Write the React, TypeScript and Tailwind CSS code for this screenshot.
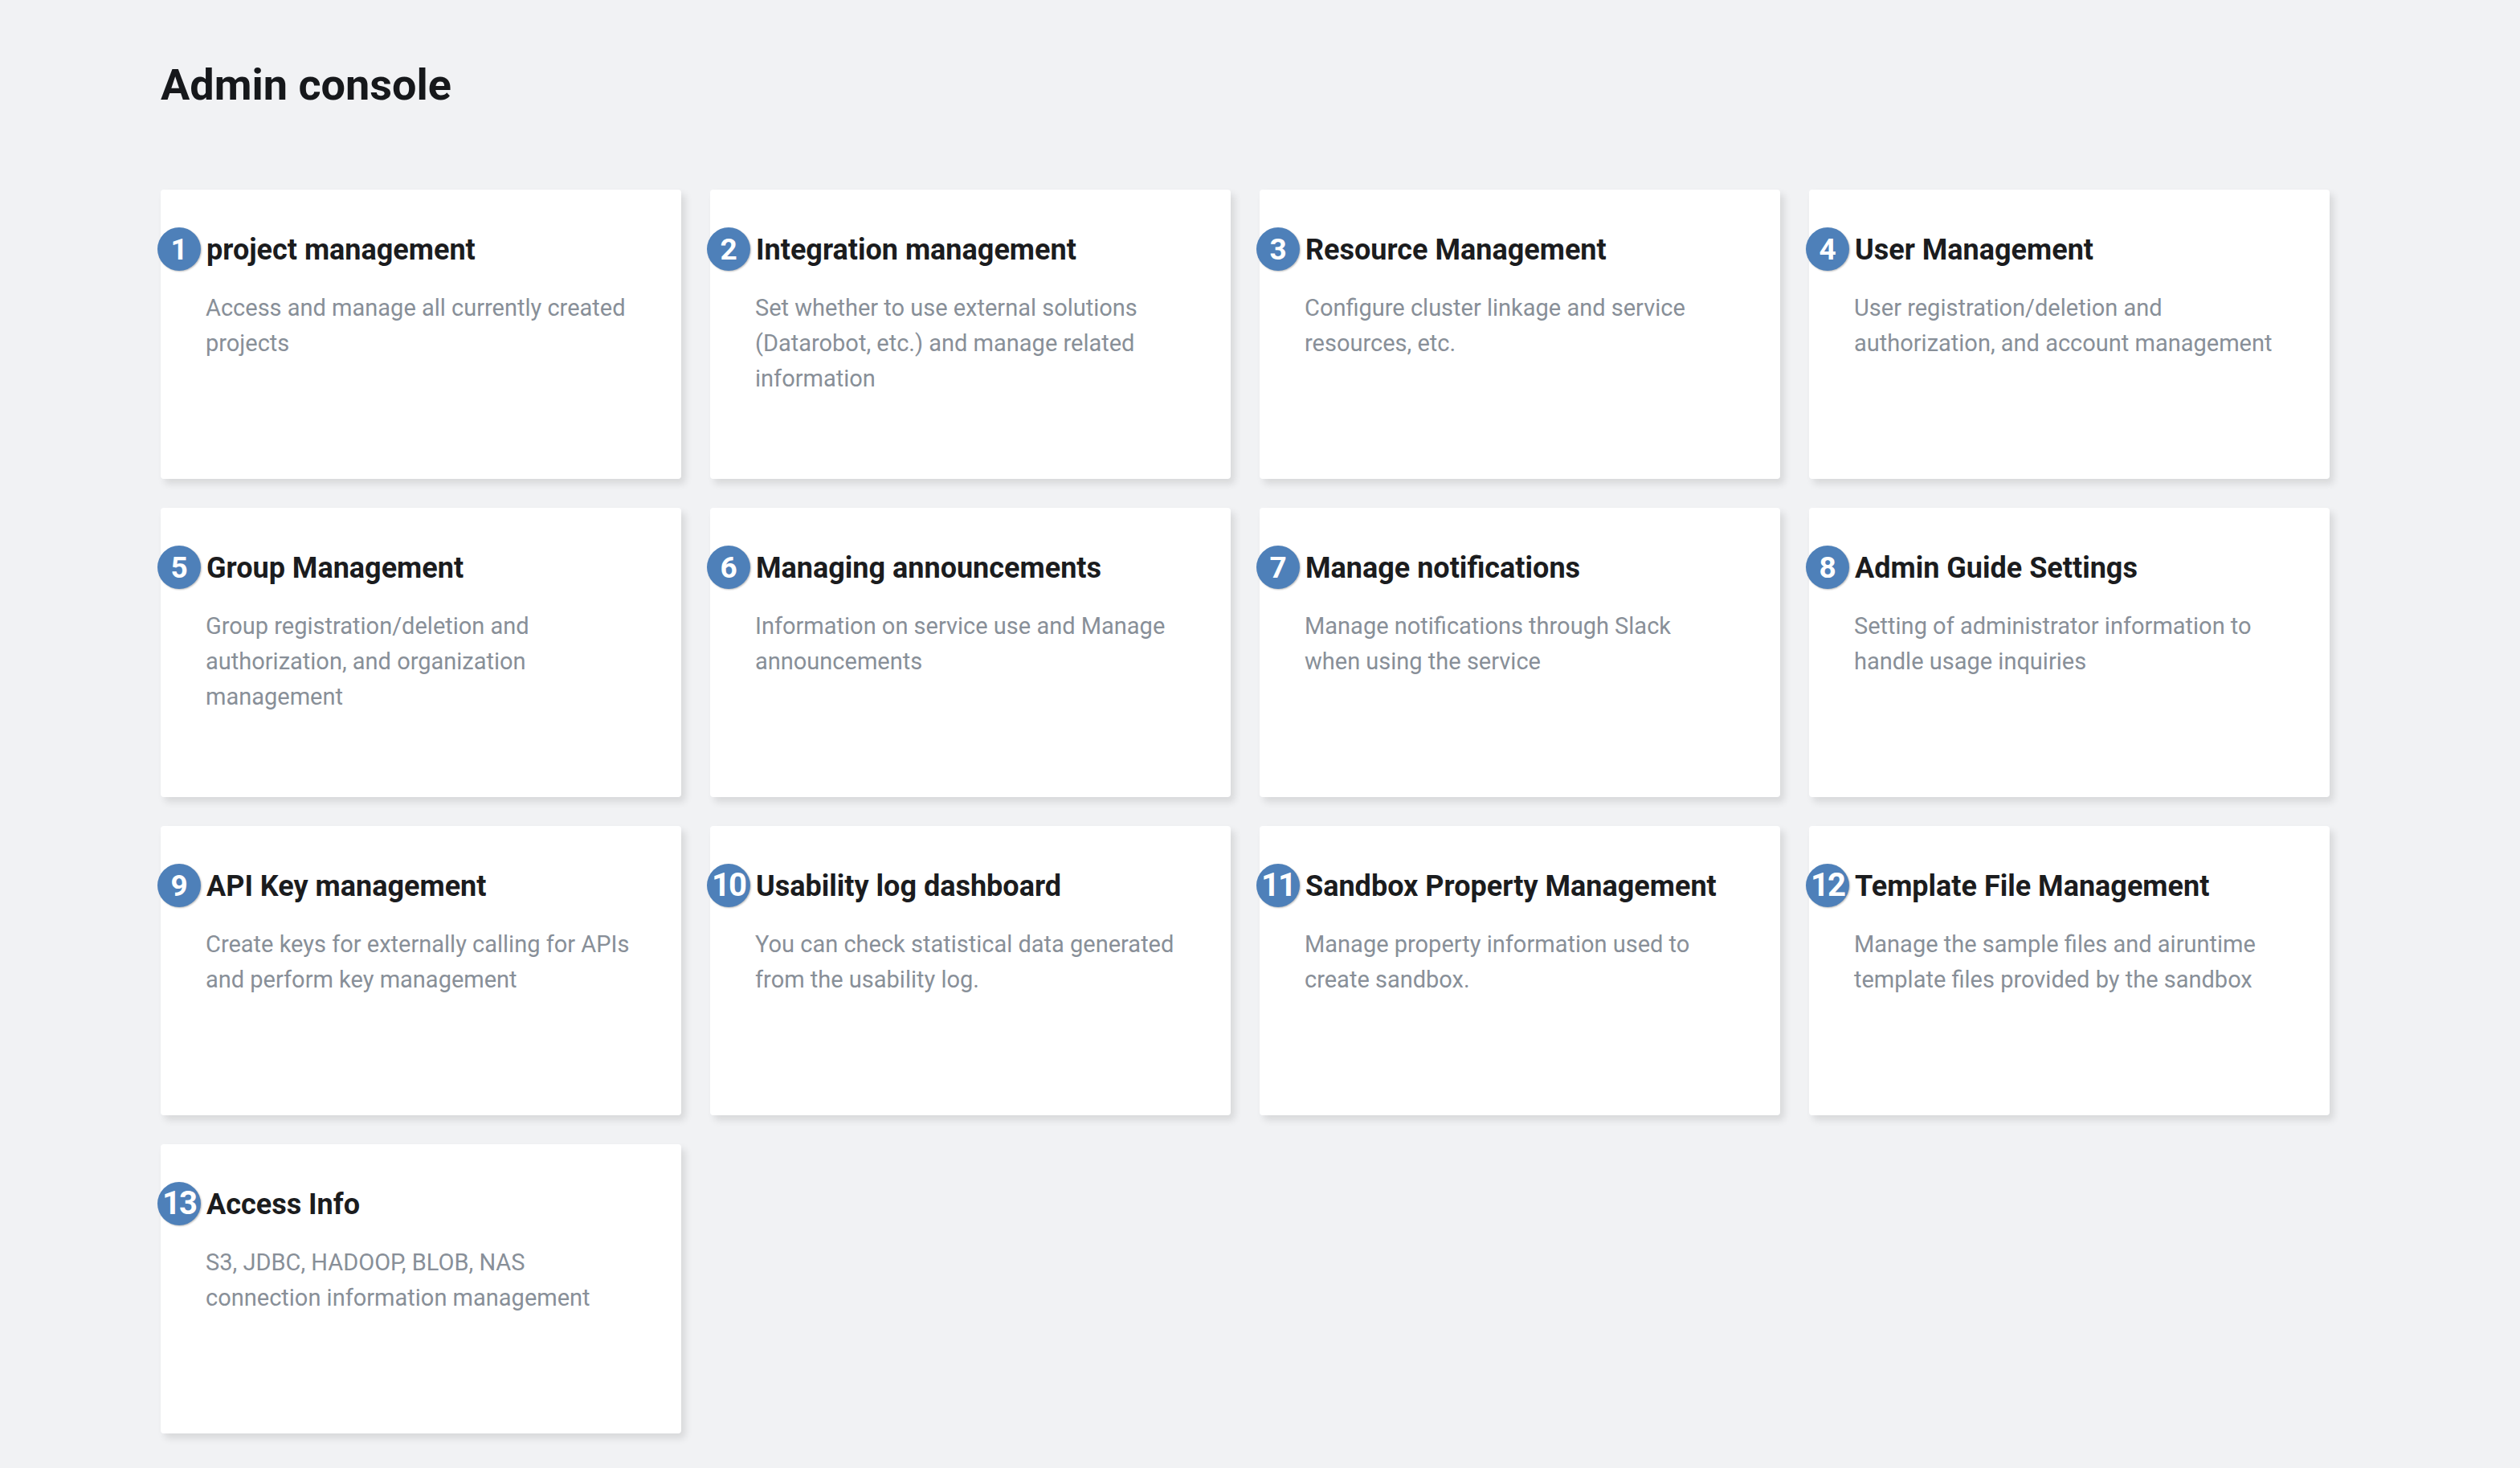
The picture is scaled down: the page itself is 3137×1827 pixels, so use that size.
const menus: { title: string; lines: string[] }[] = [
  { title: "project management", lines: ["Access and manage all currently created", "projects"] },
  { title: "Integration management", lines: ["Set whether to use external solutions", "(Datarobot, etc.) and manage related", "information"] },
  { title: "Resource Management", lines: ["Configure cluster linkage and service", "resources, etc."] },
  { title: "User Management", lines: ["User registration/deletion and", "authorization, and account management"] },
  { title: "Group Management", lines: ["Group registration/deletion and", "authorization, and organization", "management"] },
  { title: "Managing announcements", lines: ["Information on service use and Manage", "announcements"] },
  { title: "Manage notifications", lines: ["Manage notifications through Slack", "when using the service"] },
  { title: "Admin Guide Settings", lines: ["Setting of administrator information to", "handle usage inquiries"] },
  { title: "API Key management", lines: ["Create keys for externally calling for APIs", "and perform key management"] },
  { title: "Usability log dashboard", lines: ["You can check statistical data generated", "from the usability log."] },
  { title: "Sandbox Property Management", lines: ["Manage property information used to", "create sandbox."] },
  { title: "Template File Management", lines: ["Manage the sample files and airuntime", "template files provided by the sandbox"] },
  { title: "Access Info", lines: ["S3, JDBC, HADOOP, BLOB, NAS", "connection information management"] },
];

function Badge({ n }: { n: number }) {
  return (
    <div
      className={`-ml-[4px] flex h-[54px] w-[54px] shrink-0 items-center justify-center rounded-full bg-[#4e80b9] font-bold leading-none text-white shadow-[1px_1px_2px_rgba(0,0,0,0.25)] ${
        n > 9 ? "text-[40px] tracking-[-2px]" : "text-[37px]"
      }`}
    >
      {n}
    </div>
  );
}

export default function App() {
  return (
    <div className="min-h-screen bg-[#f1f2f4] px-[200px] pt-[73px] pb-[43px] font-['Roboto','Noto_Sans',sans-serif]">
      <h1 className="text-[54px] font-bold leading-[66px] text-[#16181b]">Admin console</h1>

      <div className="mt-[97px] grid grid-cols-[repeat(4,648px)] auto-rows-[360px] gap-[36px]">
        {menus.map((m, i) => (
          <div
            key={m.title}
            className="cursor-pointer rounded-[4px] bg-white pt-[47px] shadow-[5px_6px_10px_rgba(0,0,0,0.11)]"
          >
            {/* Title */}
            <div className="flex items-center gap-[7px]">
              <Badge n={i + 1} />
              <h2 className="mt-[2px] whitespace-nowrap text-[36px] font-bold leading-[44px] text-[#1b1c1e]">{m.title}</h2>
            </div>

            {/* Description */}
            <p className="mt-[24px] pl-[56px] text-[29px] leading-[44px] text-[#888f98]">
              {m.lines.map(l => (
                <span key={l} className="block whitespace-nowrap">
                  {l}
                </span>
              ))}
            </p>
          </div>
        ))}
      </div>
    </div>
  );
}
